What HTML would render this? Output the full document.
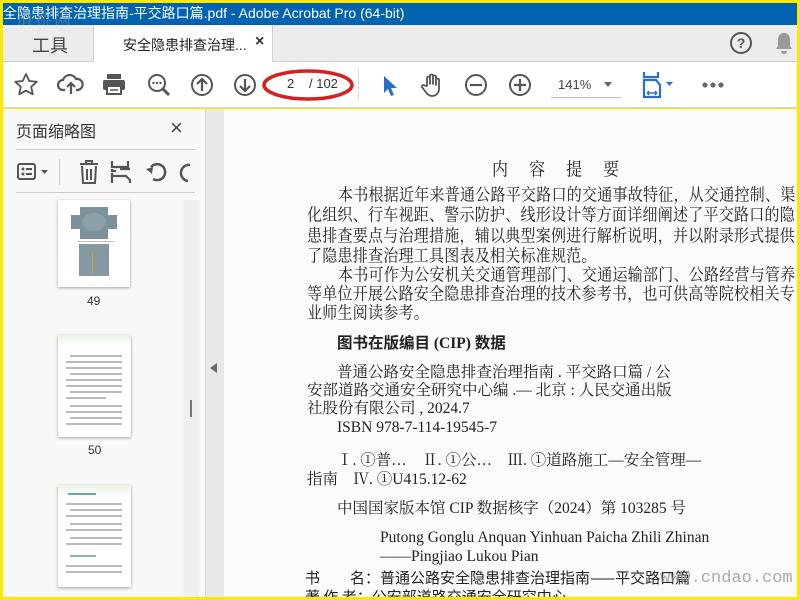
<!DOCTYPE html>
<html><head><meta charset="utf-8"><style>
*{margin:0;padding:0;box-sizing:border-box}
body{width:800px;height:600px;overflow:hidden;background:#ffe800;position:relative;font-family:"Liberation Sans","Noto Sans CJK SC",sans-serif}
.abs{position:absolute}
#title{left:3px;top:3px;width:794px;height:22px;background:#0063b1;color:#fff;font-size:14px;line-height:20px;white-space:nowrap;overflow:hidden}
#tabs{left:3px;top:25px;width:794px;height:37px;background:#ececec;border-bottom:1px solid #cfcfcf}
#tb{left:3px;top:62px;width:794px;height:46px;background:#fff;border-bottom:1px solid #d6d6d6}
#panel{left:3px;top:109px;width:202px;height:488px;background:#f8f8f8}
#gutter{left:205px;top:109px;width:19px;height:488px;background:#e8e8e8;border-left:1px solid #d0d0d0}
#page{left:224px;top:109px;width:573px;height:488px;background:#fbfbfa;overflow:hidden;font-family:"Liberation Serif","Noto Serif CJK SC",serif;color:#222}
.l{position:absolute;white-space:nowrap;font-size:15px;letter-spacing:0.25px;line-height:20px;transform:scaleY(1.12);transform-origin:0 50%}
.m{position:absolute;white-space:nowrap;font-size:15.5px;line-height:18px}
svg{position:absolute}
.thumb{position:absolute;background:#fff;box-shadow:0 1px 3px rgba(0,0,0,.35)}
.tl{position:absolute;height:2px;background:#bbb}
</style></head><body>
<div id="title" class="abs">全隐患排查治理指南-平交路口篇.pdf - Adobe Acrobat Pro (64-bit)</div>
<div class="abs" style="left:16px;top:6px;color:rgba(120,140,170,.6);font-size:17px;letter-spacing:2px;font-family:'Noto Serif CJK SC',serif">道桥网</div>
<div id="tabs" class="abs">
 <div class="abs" style="left:29px;top:7px;font-size:18px;color:#444">工具</div>
 <div class="abs" style="left:90px;top:0;width:180px;height:37px;background:#fff;border-left:1px solid #d0d0d0;border-right:1px solid #d0d0d0"></div>
 <div class="abs" style="left:120px;top:10px;font-size:14px;color:#222">安全隐患排查治理...</div>
 <div class="abs" style="left:252px;top:8px;font-size:16px;color:#333;font-weight:bold">×</div>
 <svg style="left:726px;top:6px" width="24" height="24"><circle cx="12" cy="12" r="10" fill="none" stroke="#555" stroke-width="2"/><text x="12" y="17" text-anchor="middle" font-size="14" font-weight="bold" fill="#555" font-family="Liberation Sans">?</text></svg>
 <svg style="left:770px;top:6px" width="22" height="24"><path d="M11 2c-4 0-6 3-6 7v6l-2 3h16l-2-3V9c0-4-2-7-6-7zM8 20h6a3 3 0 0 1-6 0z" fill="#999"/></svg>
</div>
<div id="tb" class="abs">
 <svg style="left:10px;top:10px" width="26" height="26"><path d="M13 2l3.3 7 7.5.8-5.6 5 1.6 7.5L13 18.6 6.2 22.3l1.6-7.5-5.6-5 7.5-.8z" fill="none" stroke="#555" stroke-width="1.8" stroke-linejoin="round"/></svg>
 <svg style="left:54px;top:10px" width="28" height="26"><path d="M8 18H6a5 5 0 0 1 0-10 7 7 0 0 1 13-1 5 5 0 0 1 2 11h-2M14 22V11m-4 4l4-4 4 4" fill="none" stroke="#555" stroke-width="2.2"/></svg>
 <svg style="left:98px;top:10px" width="26" height="24"><rect x="6" y="2" width="14" height="5" fill="#555"/><rect x="2" y="8" width="22" height="10" rx="2" fill="#555"/><rect x="6" y="14" width="14" height="8" fill="#fff" stroke="#555" stroke-width="2"/><line x1="9" y1="18" x2="17" y2="18" stroke="#555" stroke-width="1.5"/></svg>
 <svg style="left:143px;top:10px" width="26" height="26"><circle cx="11" cy="11" r="8" fill="none" stroke="#555" stroke-width="2"/><path d="M17 17l6 6" stroke="#555" stroke-width="3"/><circle cx="7.5" cy="11" r="1.2" fill="#555"/><circle cx="11" cy="11" r="1.2" fill="#555"/><circle cx="14.5" cy="11" r="1.2" fill="#555"/></svg>
 <svg style="left:187px;top:11px" width="24" height="24"><circle cx="12" cy="12" r="10" fill="none" stroke="#555" stroke-width="2"/><path d="M12 18V6m-5 5l5-5 5 5" fill="none" stroke="#555" stroke-width="2.2"/></svg>
 <svg style="left:230px;top:11px" width="24" height="24"><circle cx="12" cy="12" r="10" fill="none" stroke="#555" stroke-width="2"/><path d="M12 6v12m-5-5l5 5 5-5" fill="none" stroke="#555" stroke-width="2.2"/></svg>
 <svg style="left:258px;top:5px" width="96" height="36"><ellipse cx="47" cy="18" rx="44" ry="14" fill="none" stroke="#d42020" stroke-width="3.5"/></svg>
 <div class="abs" style="left:284px;top:14px;font-size:13px;color:#333">2</div>
 <div class="abs" style="left:306px;top:14px;font-size:13px;color:#333">/ 102</div>
 <div class="abs" style="left:355px;top:6px;width:1px;height:32px;background:#ddd"></div>
 <svg style="left:378px;top:12px" width="18" height="24"><path d="M3 2v17l4-4 3 7 3-1-3-7h6z" fill="#2a6fc9"/></svg>
 <svg style="left:417px;top:10px" width="26" height="26"><path d="M7 14V6a1.5 1.5 0 0 1 3 0v6V4a1.5 1.5 0 0 1 3 0v8V5a1.5 1.5 0 0 1 3 0v8V8a1.5 1.5 0 0 1 3 0v9c0 4-3 7-7 7-3 0-5-2-7-5l-3-4a1.5 1.5 0 0 1 2.5-1.5z" fill="none" stroke="#555" stroke-width="1.8" stroke-linejoin="round"/></svg>
 <svg style="left:461px;top:11px" width="24" height="24"><circle cx="12" cy="12" r="10" fill="none" stroke="#555" stroke-width="2"/><path d="M6 12h12" stroke="#555" stroke-width="2.2"/></svg>
 <svg style="left:505px;top:11px" width="24" height="24"><circle cx="12" cy="12" r="10" fill="none" stroke="#555" stroke-width="2"/><path d="M6 12h12M12 6v12" stroke="#555" stroke-width="2.2"/></svg>
 <div class="abs" style="left:555px;top:15px;font-size:13px;color:#444">141%</div>
 <div class="abs" style="left:601px;top:20px;border:4px solid transparent;border-top:5px solid #666"></div>
 <div class="abs" style="left:548px;top:35px;width:70px;height:1px;background:#bbb"></div>
 <svg style="left:638px;top:8px" width="34" height="30"><path d="M3 2v5h14V2" fill="none" stroke="#2a6fc9" stroke-width="2.2"/><path d="M3 10v17h16V15l-4-5H3z" fill="none" stroke="#2a6fc9" stroke-width="2.2"/><path d="M6 23h10M6 23l2-2M6 23l2 2M16 23l-2-2M16 23l-2 2" stroke="#2a6fc9" stroke-width="1.4"/><path d="M25 12h7l-3.5 4z" fill="#2a6fc9"/></svg>
 <div class="abs" style="left:698px;top:20px;width:24px;height:6px;background:radial-gradient(circle,#666 2.4px,transparent 2.6px) 0 0/8px 6px repeat-x"></div>
</div>
<div id="panel" class="abs">
 <div class="abs" style="left:13px;top:9px;font-size:16px;color:#333">页面缩略图</div>
 <div class="abs" style="left:167px;top:6px;font-size:22px;color:#444">×</div>
 <div class="abs" style="left:13px;top:40px;width:179px;height:1px;background:#ccc"></div>
 <svg style="left:14px;top:52px" width="38" height="22"><rect x="1" y="3" width="17" height="15" rx="2" fill="none" stroke="#555" stroke-width="2"/><circle cx="6" cy="8" r="1.5" fill="#555"/><circle cx="6" cy="13" r="1.5" fill="#555"/><path d="M9 8h6M9 13h6" stroke="#555" stroke-width="2"/><path d="M24 9h7l-3.5 4z" fill="#555"/></svg>
 <div class="abs" style="left:56px;top:50px;width:1px;height:26px;background:#ccc"></div>
 <svg style="left:75px;top:50px" width="22" height="26"><path d="M2 5h18M8 5V2h6v3M4 7l1 17h12l1-17M9 10v11M13 10v11" fill="none" stroke="#555" stroke-width="2"/></svg>
 <svg style="left:107px;top:50px" width="22" height="26"><path d="M2 2v6h16V2M2 10v2h4M10 10h10M2 14v10M2 17h14l4 4v3" fill="none" stroke="#555" stroke-width="2.2"/></svg>
 <svg style="left:141px;top:50px" width="26" height="26"><path d="M9 20a8 8 0 1 0-2-12" fill="none" stroke="#555" stroke-width="2.5"/><path d="M2 10l6 5 1-7z" fill="#555"/></svg>
 <svg style="left:173px;top:50px" width="16" height="26"><path d="M14 6a8 8 0 0 0-2 16" fill="none" stroke="#555" stroke-width="2.5"/></svg>
 <div class="abs" style="left:13px;top:83px;width:179px;height:1px;background:#ccc"></div>
 <div class="abs" style="left:180px;top:91px;width:16px;height:397px;background:#efefef"></div>
 <div class="abs" style="left:187px;top:291px;width:2px;height:17px;background:#777"></div>
 <div class="thumb" style="left:55px;top:91px;width:72px;height:87px">
  <div class="abs" style="left:22px;top:7px;width:28px;height:32px;background:#7d919b"></div>
  <div class="abs" style="left:13px;top:15px;width:46px;height:14px;background:#7d919b"></div>
  <div class="abs" style="left:24px;top:13px;width:24px;height:18px;background:#8aa0a8;border-radius:50%"></div>
  <div class="tl" style="left:20px;top:41px;width:36px;height:1px"></div>
  <div class="abs" style="left:21px;top:44px;width:30px;height:32px;background:#8699a3"></div>
  <div class="abs" style="left:34px;top:52px;width:1px;height:22px;background:#c9a447"></div>
 </div>
 <div class="abs" style="left:84px;top:185px;font-size:12px;color:#333">49</div>
 <div class="thumb" style="left:55px;top:226px;width:73px;height:102px;background:linear-gradient(#eaf3e6,#fff 12%)">
  <div class="tl" style="left:12px;top:20px;width:52px"></div><div class="tl" style="left:8px;top:26px;width:56px"></div><div class="tl" style="left:8px;top:32px;width:56px"></div><div class="tl" style="left:12px;top:38px;width:52px"></div><div class="tl" style="left:8px;top:44px;width:56px"></div><div class="tl" style="left:8px;top:50px;width:56px"></div><div class="tl" style="left:12px;top:56px;width:52px"></div><div class="tl" style="left:8px;top:62px;width:40px"></div><div class="tl" style="left:12px;top:70px;width:52px"></div><div class="tl" style="left:8px;top:76px;width:56px"></div><div class="tl" style="left:12px;top:82px;width:52px"></div><div class="tl" style="left:8px;top:88px;width:56px"></div>
 </div>
 <div class="abs" style="left:85px;top:334px;font-size:12px;color:#333">50</div>
 <div class="thumb" style="left:55px;top:376px;width:73px;height:102px;background:linear-gradient(#eaf3e6,#fff 12%)">
  <div class="tl" style="left:10px;top:8px;width:28px;background:#6a9"></div><div class="tl" style="left:8px;top:18px;width:56px"></div><div class="tl" style="left:12px;top:24px;width:52px"></div><div class="tl" style="left:8px;top:30px;width:56px"></div><div class="tl" style="left:12px;top:38px;width:52px"></div><div class="tl" style="left:8px;top:44px;width:56px"></div><div class="tl" style="left:12px;top:52px;width:52px"></div><div class="tl" style="left:8px;top:58px;width:56px"></div><div class="tl" style="left:12px;top:70px;width:26px;background:#8b9"></div><div class="tl" style="left:8px;top:80px;width:56px"></div><div class="tl" style="left:8px;top:86px;width:56px"></div>
 </div>
</div>
<div id="gutter" class="abs"><div class="abs" style="left:4px;top:254px;border:5px solid transparent;border-right:7px solid #666;border-left:0"></div></div>
<div id="page" class="abs">
 <div class="l" style="left:268px;top:52px;letter-spacing:21px;font-size:16px">内容提要</div>
 <div class="l" style="left:114px;top:77px">本书根据近年来普通公路平交路口的交通事故特征，从交通控制、渠</div>
 <div class="l" style="left:83px;top:97px">化组织、行车视距、警示防护、线形设计等方面详细阐述了平交路口的隐</div>
 <div class="l" style="left:83px;top:118px">患排查要点与治理措施，辅以典型案例进行解析说明，并以附录形式提供</div>
 <div class="l" style="left:83px;top:138px">了隐患排查治理工具图表及相关标准规范。</div>
 <div class="l" style="left:114px;top:157px">本书可作为公安机关交通管理部门、交通运输部门、公路经营与管养</div>
 <div class="l" style="left:83px;top:176px">等单位开展公路安全隐患排查治理的技术参考书，也可供高等院校相关专</div>
 <div class="l" style="left:83px;top:195px">业师生阅读参考。</div>
 <div class="m" style="left:113px;top:226px;font-weight:bold;font-family:'Liberation Serif','Noto Sans CJK SC',serif">图书在版编目 (CIP) 数据</div>
 <div class="m" style="left:113px;top:255px">普通公路安全隐患排查治理指南 . 平交路口篇 / 公</div>
 <div class="m" style="left:83px;top:273px">安部道路交通安全研究中心编 .— 北京 : 人民交通出版</div>
 <div class="m" style="left:83px;top:291px">社股份有限公司 , 2024.7</div>
 <div class="m" style="left:113px;top:310px">ISBN 978-7-114-19545-7</div>
 <div class="m" style="left:113px;top:343px">Ⅰ. ①普…　Ⅱ. ①公…　Ⅲ. ①道路施工—安全管理—</div>
 <div class="m" style="left:83px;top:362px">指南　Ⅳ. ①U415.12-62</div>
 <div class="m" style="left:113px;top:391px">中国国家版本馆 CIP 数据核字（2024）第 103285 号</div>
 <div class="m" style="left:156px;top:420px">Putong Gonglu Anquan Yinhuan Paicha Zhili Zhinan</div>
 <div class="m" style="left:156px;top:439px">——Pingjiao Lukou Pian</div>
 <div class="m" style="left:81px;top:460px;font-family:'Noto Sans CJK SC',sans-serif;font-size:15px">书　　名：普通公路安全隐患排查治理指南——平交路口篇</div>
 <div class="m" style="left:81px;top:479px;font-family:'Noto Sans CJK SC',sans-serif;font-size:15px">著 作 者：公安部道路交通安全研究中心</div>
 <div class="abs" style="left:436px;top:460px;font-family:'Liberation Mono',monospace;font-size:17px;color:rgba(150,150,150,.8);white-space:nowrap">www.cndao.com</div>
</div>
</body></html>
